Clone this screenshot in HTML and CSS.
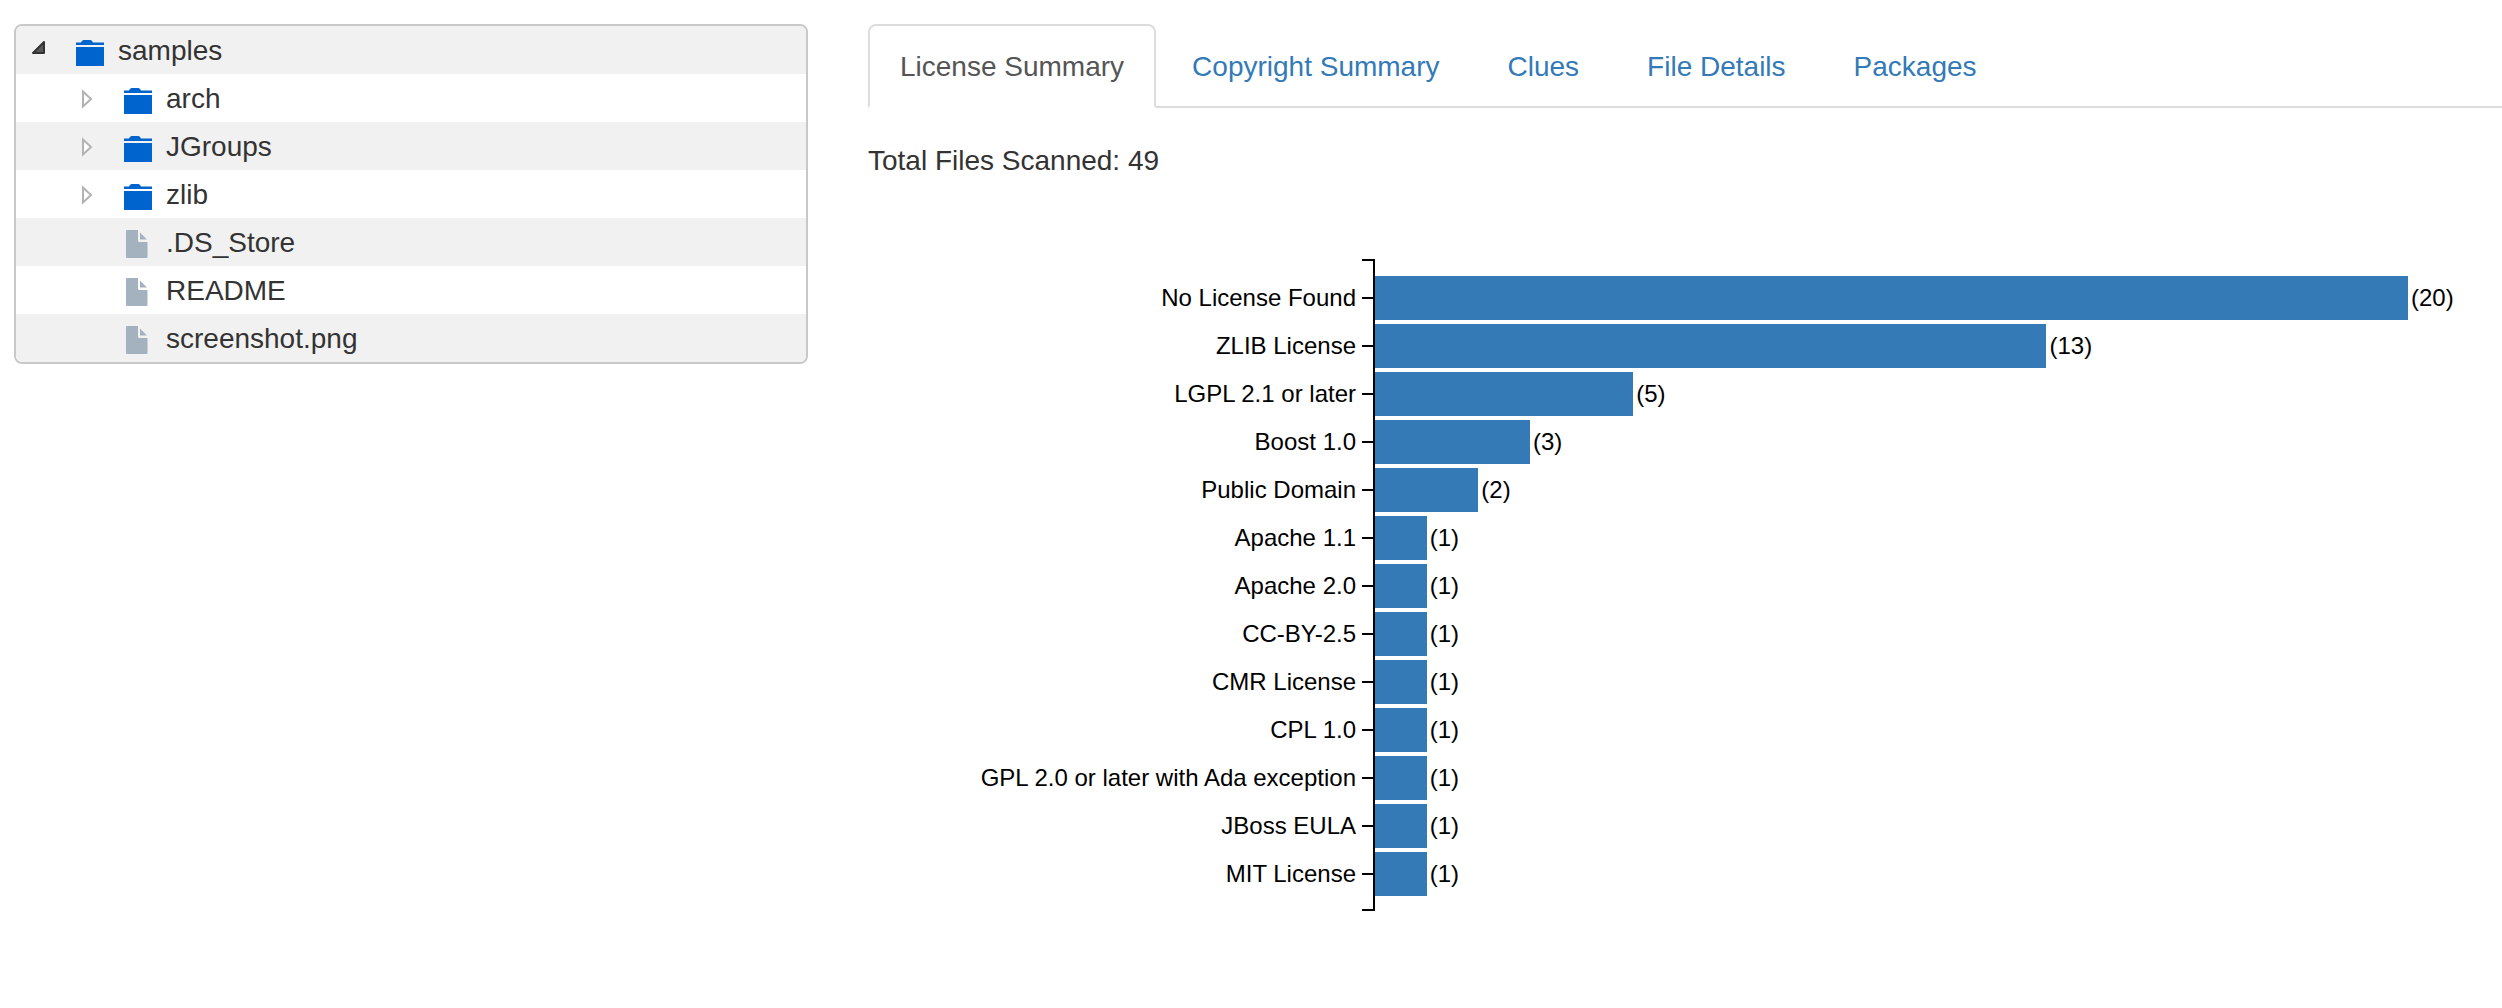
FILE: index.html
```html
<!DOCTYPE html>
<html lang="en">
<head>
<meta charset="utf-8">
<meta name="viewport" content="width=device-width, initial-scale=1">
<title>License Summary</title>
<link rel="stylesheet" href="styles.css">
</head>
<body>
<svg class="sprite" aria-hidden="true">
  <symbol id="open" viewBox="0 0 60 48"><path d="M28 16v11H17z" fill="#595959" stroke="#333" stroke-width="2" stroke-linejoin="round"/></symbol>
  <symbol id="closed" viewBox="0 0 60 48"><path d="M19 17.500v15L27 25z" fill="#fff" stroke="#b3b3b3" stroke-width="2"/></symbol>
  <symbol id="folder" viewBox="0 0 28 28"><path d="M0 5V2.500h5C6 .6 7 0 8.500 0h5C15 0 16 .6 17 2.500h11V5zM0 7h28v19H0z" fill="#0064cf"/></symbol>
  <symbol id="file" viewBox="0 0 28 28"><path d="M3 0h11v10.500q0 1.500 1.500 1.500H23.500v15q0 1-1 1H3q-1 0-1-1V1q0-1 1-1zM16 2.500l7 7H16z" fill="#a4b1be"/></symbol>
</svg>
<div class="page">
  <nav class="tree" aria-label="Scanned files">
    <ul class="tree-list" role="tree">
      <li class="node" role="treeitem" aria-level="1" aria-expanded="true"><button class="toggle" type="button" aria-label="Collapse samples"><svg><use href="#open"/></svg></button><svg class="icon"><use href="#folder"/></svg><span>samples</span></li>
      <li class="node child" role="treeitem" aria-level="2" aria-expanded="false"><button class="toggle" type="button" aria-label="Expand arch"><svg><use href="#closed"/></svg></button><svg class="icon"><use href="#folder"/></svg><span>arch</span></li>
      <li class="node child" role="treeitem" aria-level="2" aria-expanded="false"><button class="toggle" type="button" aria-label="Expand JGroups"><svg><use href="#closed"/></svg></button><svg class="icon"><use href="#folder"/></svg><span>JGroups</span></li>
      <li class="node child" role="treeitem" aria-level="2" aria-expanded="false"><button class="toggle" type="button" aria-label="Expand zlib"><svg><use href="#closed"/></svg></button><svg class="icon"><use href="#folder"/></svg><span>zlib</span></li>
      <li class="node child leaf" role="treeitem" aria-level="2"><svg class="icon"><use href="#file"/></svg><span>.DS_Store</span></li>
      <li class="node child leaf" role="treeitem" aria-level="2"><svg class="icon"><use href="#file"/></svg><span>README</span></li>
      <li class="node child leaf" role="treeitem" aria-level="2"><svg class="icon"><use href="#file"/></svg><span>screenshot.png</span></li>
    </ul>
  </nav>
  <main class="content">
    <ul class="tabs">
      <li><a class="tab active" href="#license" aria-current="page">License Summary</a></li>
      <li><a class="tab" href="#copyright">Copyright Summary</a></li>
      <li><a class="tab" href="#clues">Clues</a></li>
      <li><a class="tab" href="#files">File Details</a></li>
      <li><a class="tab" href="#packages">Packages</a></li>
    </ul>
    <p class="total">Total Files Scanned: 49</p>
    <div class="chart">
      <ul class="labels">
        <li>No License Found</li>
        <li>ZLIB License</li>
        <li>LGPL 2.1 or later</li>
        <li>Boost 1.0</li>
        <li>Public Domain</li>
        <li>Apache 1.1</li>
        <li>Apache 2.0</li>
        <li>CC-BY-2.5</li>
        <li>CMR License</li>
        <li>CPL 1.0</li>
        <li>GPL 2.0 or later with Ada exception</li>
        <li>JBoss EULA</li>
        <li>MIT License</li>
      </ul>
      <div class="axis" aria-hidden="true"><i></i><i></i><i></i><i></i><i></i><i></i><i></i><i></i><i></i><i></i><i></i><i></i><i></i></div>
      <ul class="bars">
        <li><span class="bar" style="width:100%"></span><span>(20)</span></li>
        <li><span class="bar" style="width:65%"></span><span>(13)</span></li>
        <li><span class="bar" style="width:25%"></span><span>(5)</span></li>
        <li><span class="bar" style="width:15%"></span><span>(3)</span></li>
        <li><span class="bar" style="width:10%"></span><span>(2)</span></li>
        <li><span class="bar" style="width:5%"></span><span>(1)</span></li>
        <li><span class="bar" style="width:5%"></span><span>(1)</span></li>
        <li><span class="bar" style="width:5%"></span><span>(1)</span></li>
        <li><span class="bar" style="width:5%"></span><span>(1)</span></li>
        <li><span class="bar" style="width:5%"></span><span>(1)</span></li>
        <li><span class="bar" style="width:5%"></span><span>(1)</span></li>
        <li><span class="bar" style="width:5%"></span><span>(1)</span></li>
        <li><span class="bar" style="width:5%"></span><span>(1)</span></li>
      </ul>
    </div>
  </main>
</div>
</body>
</html>
```
FILE: styles.css
```css
* {
  box-sizing: border-box;
}

body {
  margin: 0;
  background: #fff;
  color: #333;
  font: 28px/40px "Liberation Sans", Arial, sans-serif;
}

ul {
  list-style: none;
  margin: 0;
  padding: 0;
}

.sprite {
  display: none;
}

.page {
  display: grid;
  grid-template-columns: minmax(0, 397fr) minmax(0, 817fr);
  gap: 60px;
  align-items: start;
  padding: 24px 0 24px 14px;
}

/* File tree */
.tree {
  border: 2px solid #c8c8c8;
  border-radius: 8px;
  overflow: hidden;
}

.node {
  display: flex;
  align-items: flex-start;
  height: 48px;
  line-height: 50px;
  white-space: nowrap;
}

.node:nth-child(odd) {
  background: #f1f1f1;
}

.child {
  padding-left: 48px;
}

.leaf {
  padding-left: 108px;
}

.toggle {
  flex: none;
  width: 60px;
  height: 48px;
  padding: 0;
  border: 0;
  background: none;
  cursor: pointer;
}

.toggle svg {
  display: block;
  width: 60px;
  height: 48px;
}

.icon {
  flex: none;
  width: 28px;
  height: 28px;
  margin: 14px 14px 0 0;
}

.leaf .icon {
  margin-top: 12px;
}

/* Tabs */
.tabs {
  display: flex;
  gap: 4px;
  border-bottom: 2px solid #ddd;
}

.tab {
  display: block;
  margin-bottom: -2px;
  padding: 21px 30px 19px;
  border: 2px solid transparent;
  border-radius: 8px 8px 0 0;
  color: #337ab7;
  text-decoration: none;
  white-space: nowrap;
}

.tab.active {
  border-color: #ddd #ddd #fff;
  background: #fff;
  color: #555;
}

.total {
  margin: 33px 0 78px;
}

/* Bar chart */
.chart {
  display: flex;
  color: #000;
  font-size: 24px;
  line-height: 48px;
  white-space: nowrap;
}

.labels {
  flex: none;
  width: 494px;
  padding: 15px 6px 0 0;
  text-align: right;
}

.axis {
  flex: none;
  width: 13px;
  padding: 13px 0 11px;
  border: 2px solid #000;
  border-left: 0;
}

.axis i {
  display: block;
  height: 2px;
  margin: 23px 0 46px;
  background: #000;
}

.axis i:last-child {
  margin-bottom: 23px;
}

.axis i + i {
  margin-top: 0;
}

.bars {
  flex: 1;
  min-width: 0;
  padding: 15px 94px 0 0;
}

.bars li {
  display: flex;
  align-items: center;
  gap: 3px;
  height: 48px;
}

.bar {
  flex: none;
  height: 44px;
  background: #337ab7;
}
```
